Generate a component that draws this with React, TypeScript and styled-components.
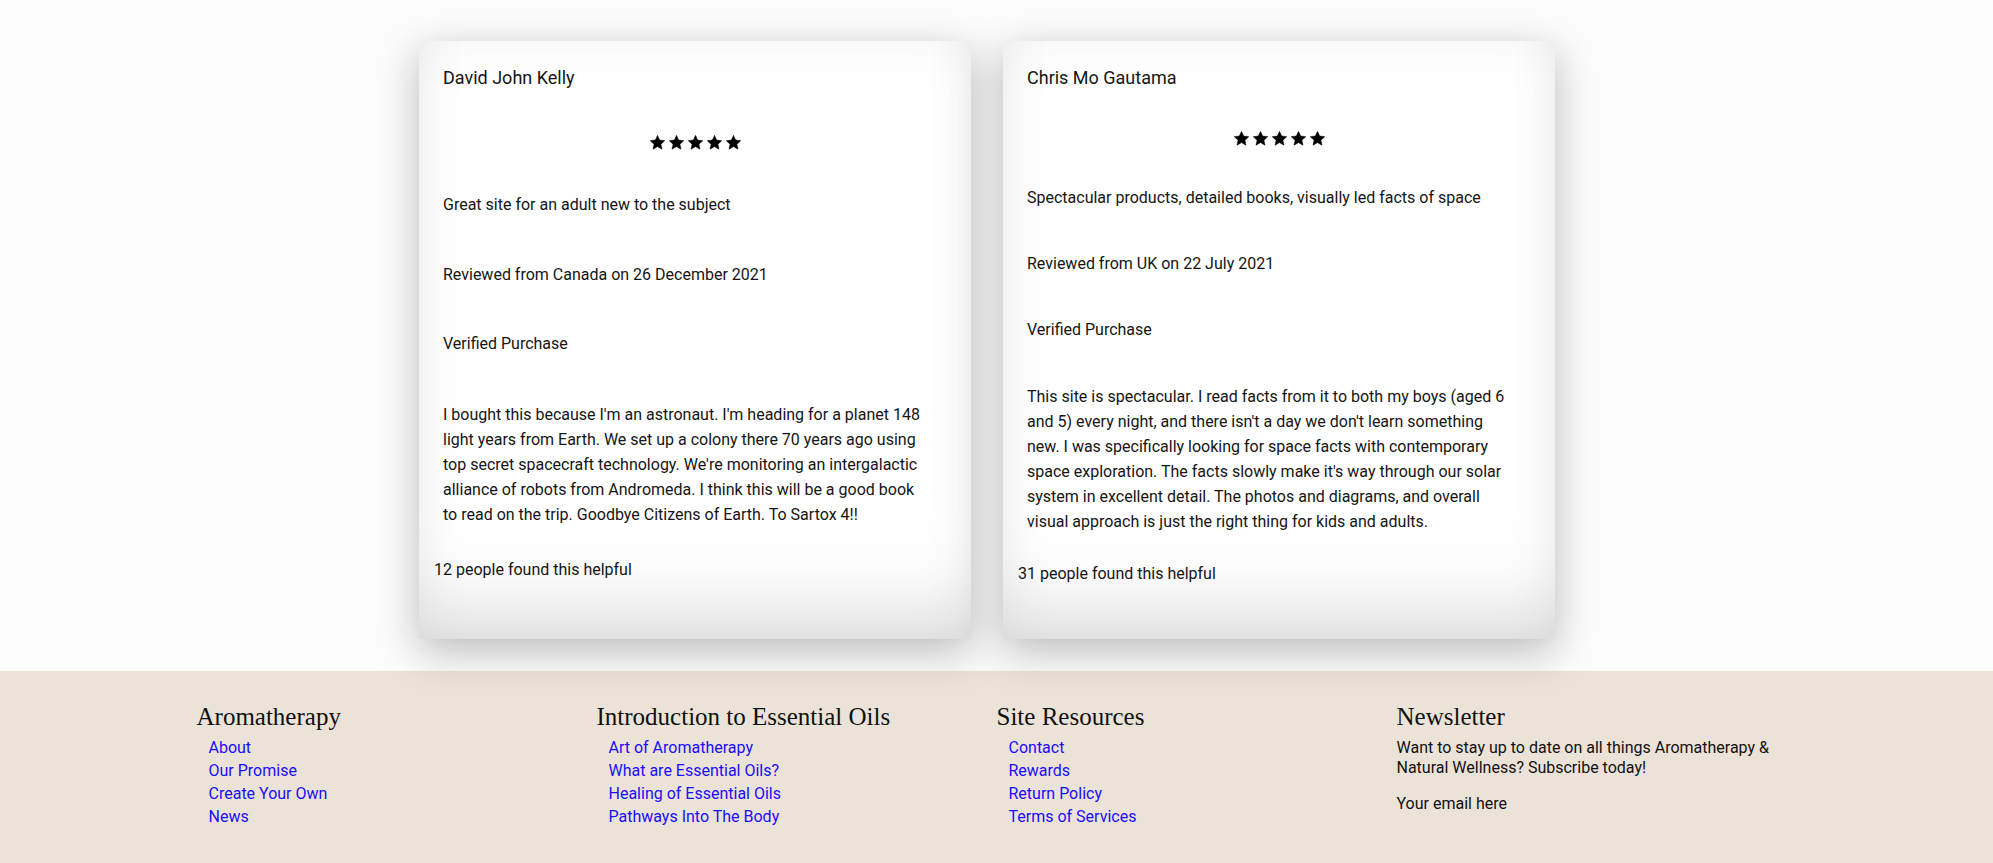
import React from "react";
import styled, { createGlobalStyle } from "styled-components";

const GlobalStyle = createGlobalStyle`
  html, body {
    margin: 0;
    padding: 0;
  }
  body {
    background: #fcfcfc;
    font-family: Roboto, "Liberation Sans", sans-serif;
    color: #111;
  }
  * {
    box-sizing: border-box;
  }
`;

const Page = styled.div`
  display: flex;
  flex-direction: column;
`;

const ReviewSection = styled.section`
  display: flex;
  align-items: stretch;
  gap: 32px;
  padding: 41px 0 32px 419px;
  position: relative;
  z-index: 1;
`;

const Card = styled.article`
  width: 552px;
  display: flex;
  flex-direction: column;
  justify-content: space-between;
  padding: 25px 46px 0 24px;
  background: #ffffff;
  color: #151515;
  font-family: Roboto, "Liberation Sans", sans-serif;
  box-shadow: 0 12px 40px rgba(0, 0, 0, 0.26),
    inset 0 -60px 80px -30px rgba(0, 0, 0, 0.12),
    inset 0 0 50px rgba(0, 0, 0, 0.055);

  &::after {
    content: "";
    flex: none;
    height: 53px;
  }
`;

const Reviewer = styled.h3`
  margin: 0;
  font-size: 18px;
  line-height: 24px;
  font-weight: 400;
`;

const Stars = styled.div`
  margin-top: 40px;
  margin-right: -22px;
  display: flex;
  justify-content: center;
  gap: 2px;
  height: 17px;
`;

const CardText = styled.p<{ $gap: number }>`
  margin: ${(p) => p.$gap}px 0 0;
  font-size: 16px;
  line-height: 25px;
`;

const Helpful = styled.p`
  margin: 27px 0 0 -9px;
  font-size: 16px;
  line-height: 25px;
`;

const Footer = styled.footer`
  background: #ece3d8;
  height: 192px;
  padding-top: 31px;
`;

const FooterInner = styled.div`
  width: 1600px;
  margin: 0 auto;
  display: grid;
  grid-template-columns: repeat(4, 400px);
`;

const FooterCol = styled.div`
  display: flex;
  flex-direction: column;
`;

const ColTitle = styled.h3`
  margin: 0;
  font-family: "Liberation Serif", "Times New Roman", serif;
  font-weight: 400;
  font-size: 25px;
  line-height: 29px;
  color: #111;
`;

const LinkList = styled.ul`
  list-style: none;
  margin: 5px 0 0;
  padding: 0 0 0 12px;
`;

const LinkItem = styled.li`
  font-size: 16px;
  line-height: 23px;
`;

const FooterLink = styled.a`
  color: #1a0dff;
  text-decoration: none;
`;

const NewsText = styled.p<{ $gap: number }>`
  margin: ${(p) => p.$gap}px 0 0;
  font-size: 16px;
  line-height: 20px;
  max-width: 395px;
  color: #111;
`;

const Star = () => (
  <svg width="17" height="17" viewBox="0 0 24 24" aria-hidden="true">
    <path
      d="M12 2l3 6.6 7.2.8-5.4 4.9 1.5 7.1L12 17.8l-6.3 3.6 1.5-7.1-5.4-4.9 7.2-.8z"
      fill="#000"
      stroke="#000"
      strokeWidth="0.8"
      strokeLinejoin="round"
    />
  </svg>
);

type Review = {
  name: string;
  title: string;
  reviewed: string;
  body: string;
  helpful: string;
};

const reviews: Review[] = [
  {
    name: "David John Kelly",
    title: "Great site for an adult new to the subject",
    reviewed: "Reviewed from Canada on 26 December 2021",
    body:
      "I bought this because I'm an astronaut. I'm heading for a planet 148 light years from Earth. We set up a colony there 70 years ago using top secret spacecraft technology. We're monitoring an intergalactic alliance of robots from Andromeda. I think this will be a good book to read on the trip. Goodbye Citizens of Earth. To Sartox 4!!",
    helpful: "12 people found this helpful",
  },
  {
    name: "Chris Mo Gautama",
    title: "Spectacular products, detailed books, visually led facts of space",
    reviewed: "Reviewed from UK on 22 July 2021",
    body:
      "This site is spectacular. I read facts from it to both my boys (aged 6 and 5) every night, and there isn't a day we don't learn something new. I was specifically looking for space facts with contemporary space exploration. The facts slowly make it's way through our solar system in excellent detail. The photos and diagrams, and overall visual approach is just the right thing for kids and adults.",
    helpful: "31 people found this helpful",
  },
];

const columns = [
  {
    title: "Aromatherapy",
    links: ["About", "Our Promise", "Create Your Own", "News"],
  },
  {
    title: "Introduction to Essential Oils",
    links: [
      "Art of Aromatherapy",
      "What are Essential Oils?",
      "Healing of Essential Oils",
      "Pathways Into The Body",
    ],
  },
  {
    title: "Site Resources",
    links: ["Contact", "Rewards", "Return Policy", "Terms of Services"],
  },
];

export default function App() {
  return (
    <Page>
      <GlobalStyle />
      <ReviewSection>
        {reviews.map((r) => (
          <Card key={r.name}>
            <Reviewer>{r.name}</Reviewer>
            <Stars>
              {[0, 1, 2, 3, 4].map((i) => (
                <Star key={i} />
              ))}
            </Stars>
            <CardText $gap={38}>{r.title}</CardText>
            <CardText $gap={41}>{r.reviewed}</CardText>
            <CardText $gap={41}>Verified Purchase</CardText>
            <CardText $gap={42}>{r.body}</CardText>
            <Helpful>{r.helpful}</Helpful>
          </Card>
        ))}
      </ReviewSection>
      <Footer>
        <FooterInner>
          {columns.map((c) => (
            <FooterCol key={c.title}>
              <ColTitle>{c.title}</ColTitle>
              <LinkList>
                {c.links.map((l) => (
                  <LinkItem key={l}>
                    <FooterLink href="#">{l}</FooterLink>
                  </LinkItem>
                ))}
              </LinkList>
            </FooterCol>
          ))}
          <FooterCol>
            <ColTitle>Newsletter</ColTitle>
            <NewsText $gap={7}>
              Want to stay up to date on all things Aromatherapy &amp; Natural
              Wellness? Subscribe today!
            </NewsText>
            <NewsText $gap={16}>Your email here</NewsText>
          </FooterCol>
        </FooterInner>
      </Footer>
    </Page>
  );
}
